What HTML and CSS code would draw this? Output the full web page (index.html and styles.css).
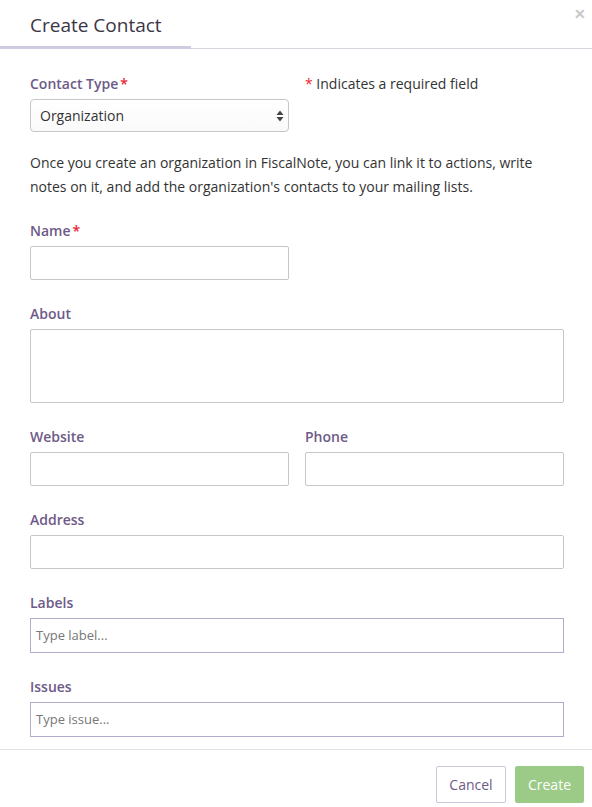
FILE: index.html
```html
<!DOCTYPE html>
<html>
<head>
<meta charset="utf-8">
<link rel="stylesheet" href="styles.css">
</head>
<body>
<div class="modal">
  <div class="modal-header">
    <div class="title-tab"><h1 class="title">Create Contact</h1></div>
    <span class="close">&#x2715;</span>
  </div>
  <div class="modal-body">
    <div class="row top-row">
      <div class="col">
        <label class="field-label">Contact Type<span class="req">*</span></label>
        <div class="select">
          <span>Organization</span>
          <svg class="arrows" width="8" height="12" viewBox="0 0 8 12"><path d="M4 0.5 L7.5 5 L0.5 5 Z" fill="#444"/><path d="M4 11.5 L7.5 7 L0.5 7 Z" fill="#444"/></svg>
        </div>
      </div>
      <div class="col req-note"><span class="req">*</span> Indicates a required field</div>
    </div>
    <p class="intro">Once you create an organization in FiscalNote, you can link it to actions, write notes on it, and add the organization's contacts to your mailing lists.</p>
    <div class="group">
      <label class="field-label">Name<span class="req">*</span></label>
      <div class="input half"></div>
    </div>
    <div class="group">
      <label class="field-label">About</label>
      <div class="input textarea"></div>
    </div>
    <div class="group row">
      <div class="col">
        <label class="field-label">Website</label>
        <div class="input"></div>
      </div>
      <div class="col">
        <label class="field-label">Phone</label>
        <div class="input"></div>
      </div>
    </div>
    <div class="group">
      <label class="field-label">Address</label>
      <div class="input"></div>
    </div>
    <div class="group">
      <label class="field-label">Labels</label>
      <div class="input tag">Type label...</div>
    </div>
    <div class="group last">
      <label class="field-label">Issues</label>
      <div class="input tag">Type issue...</div>
    </div>
  </div>
  <div class="modal-footer">
    <button class="btn cancel">Cancel</button>
    <button class="btn create">Create</button>
  </div>
</div>
</body>
</html>
```
FILE: styles.css
```css
html, body {
  margin: 0;
  padding: 0;
  background: #fff;
}
body {
  font-family: "Open Sans", "Liberation Sans", sans-serif;
  color: #333;
  font-size: 14px;
}
.modal {
  width: 592px;
  height: 807px;
  display: flex;
  flex-direction: column;
}
.modal-header {
  position: relative;
  height: 48px;
  flex: none;
  border-bottom: 1px solid #d6d4dd;
  display: flex;
  align-items: flex-end;
}
.title-tab {
  width: 191px;
  height: 100%;
  box-sizing: border-box;
  border-bottom: 3px solid #cfcbe0;
  margin-bottom: -1px;
  padding-left: 30px;
}
.title {
  margin: 0;
  font-weight: 400;
  font-size: 19px;
  line-height: 26px;
  padding-top: 11px;
  color: #3b3645;
  white-space: nowrap;
}
.close {
  position: absolute;
  right: 6px;
  top: 4px;
  font-size: 14px;
  font-weight: 700;
  color: #c8c8c8;
}
.modal-body {
  padding: 25px 28px 0 30px;
  flex: 1;
}
.row {
  display: flex;
  gap: 16px;
}
.col {
  flex: 1;
}
.field-label {
  display: block;
  font-weight: 600;
  color: #6e5a87;
  font-size: 14px;
  line-height: 20px;
  margin-bottom: 5px;
}
.req {
  color: #e8262f;
  margin-left: 2px;
}
.req-note .req {
  margin-left: 0;
}
.req-note {
  line-height: 20px;
  color: #333;
}
.select {
  height: 33px;
  box-sizing: border-box;
  border: 1px solid #c6c6c6;
  border-radius: 4px;
  display: flex;
  align-items: center;
  justify-content: space-between;
  padding: 0 4px 0 9px;
  background: linear-gradient(#fff, #fafafa);
  color: #333;
}
.arrows {
  display: block;
}
.intro {
  margin: 19px 0 22px 0;
  line-height: 24px;
  font-size: 14px;
  color: #333;
}
.group {
  margin-bottom: 24px;
}
.group.last {
  margin-bottom: 0;
}
.input {
  height: 34px;
  box-sizing: border-box;
  border: 1px solid #c6c6c6;
  border-radius: 2px;
  background: #fff;
}
.input.half {
  width: 259px;
}
.input.textarea {
  height: 74px;
}
.input.tag {
  height: 35px;
  border-color: #b4abcc;
  border-radius: 0;
  color: #777;
  font-size: 13px;
  line-height: 33px;
  padding-left: 5px;
}
.modal-footer {
  flex: none;
  border-top: 1px solid #e3e3e3;
  display: flex;
  justify-content: flex-end;
  gap: 9px;
  padding: 16px 8px 0 0;
  height: 58px;
  box-sizing: border-box;
}
.btn {
  font-family: "Open Sans", "Liberation Sans", sans-serif;
  font-size: 14px;
  height: 37px;
  border-radius: 2px;
  padding: 0;
  margin: 0;
  cursor: pointer;
}
.cancel {
  width: 70px;
  background: #fff;
  border: 1px solid #cdc7db;
  color: #6e5a87;
}
.create {
  width: 69px;
  background: #9ccb87;
  border: 1px solid #9ccb87;
  color: #fff;
}
```
